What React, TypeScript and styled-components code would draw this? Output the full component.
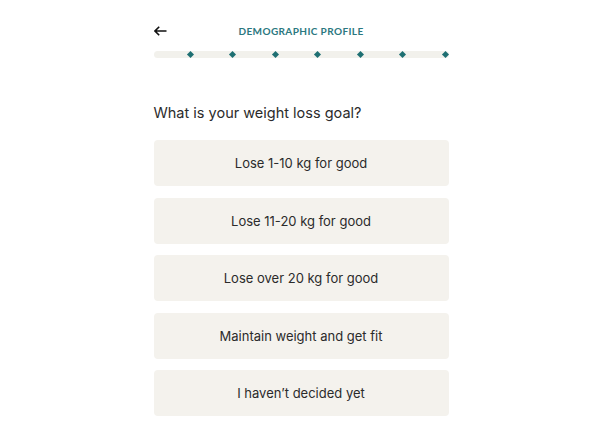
import React from 'react';
import styled, { createGlobalStyle } from 'styled-components';

const GlobalStyle = createGlobalStyle`
  html, body {
    margin: 0;
    padding: 0;
    background: #ffffff;
  }
  body {
    font-family: Inter, "Liberation Sans", sans-serif;
    color: #2b2b2b;
  }
`;

const options = [
  'Lose 1-10 kg for good',
  'Lose 11-20 kg for good',
  'Lose over 20 kg for good',
  'Maintain weight and get fit',
  'I haven\u2019t decided yet',
];

// Style
const Page = styled.main`
  width: 295px;
  margin: 0 auto;
  padding-top: 21px;
`;

const Header = styled.header`
  position: relative;
  display: flex;
  align-items: center;
  justify-content: center;
  height: 20px;
`;

const BackButton = styled.button`
  position: absolute;
  left: 0;
  top: 50%;
  transform: translateY(-50%);
  display: flex;
  padding: 0;
  border: none;
  background: none;
  cursor: pointer;
`;

const Title = styled.h1`
  margin: 0;
  font-family: Lato, "Liberation Sans", sans-serif;
  font-size: 10px;
  font-weight: 700;
  letter-spacing: 0.4px;
  color: #2b7880;
  text-transform: uppercase;
`;

const Progress = styled.div`
  display: flex;
  align-items: center;
  justify-content: flex-end;
  gap: 37.5px;
  height: 7px;
  margin-top: 10px;
  padding-right: 1px;
  border-radius: 4px;
  background: #f2f1ec;
`;

const Step = styled.span`
  width: 5px;
  height: 5px;
  background: #1e6f72;
  transform: rotate(45deg);
`;

const Question = styled.h2`
  margin: 44px 0 0;
  font-size: 14.5px;
  font-weight: 400;
  line-height: 22px;
  color: #2b2b2b;
`;

const Options = styled.div`
  display: flex;
  flex-direction: column;
  gap: 11.5px;
  margin-top: 16px;
`;

const Option = styled.button`
  height: 46px;
  border: none;
  border-radius: 4px;
  background: #f4f2ed;
  font-family: Inter, "Liberation Sans", sans-serif;
  font-size: 13px;
  color: #2b2b2b;
  cursor: pointer;
`;

// Component
function App() {
  return (
    <>
      <GlobalStyle />
      <Page>
        <Header>
          <BackButton aria-label="Back">
            <svg width="13" height="10" viewBox="0 0 13 10" fill="none">
              <path d="M12.5 5H1.2M5.2 0.8L1 5l4.2 4.2" stroke="#111" strokeWidth="1.6" />
            </svg>
          </BackButton>
          <Title>Demographic profile</Title>
        </Header>
        <Progress>
          {Array.from({ length: 7 }).map((_, i) => (
            <Step key={i} />
          ))}
        </Progress>
        <Question>What is your weight loss goal?</Question>
        <Options>
          {options.map((label) => (
            <Option key={label}>{label}</Option>
          ))}
        </Options>
      </Page>
    </>
  );
}

export default App;
